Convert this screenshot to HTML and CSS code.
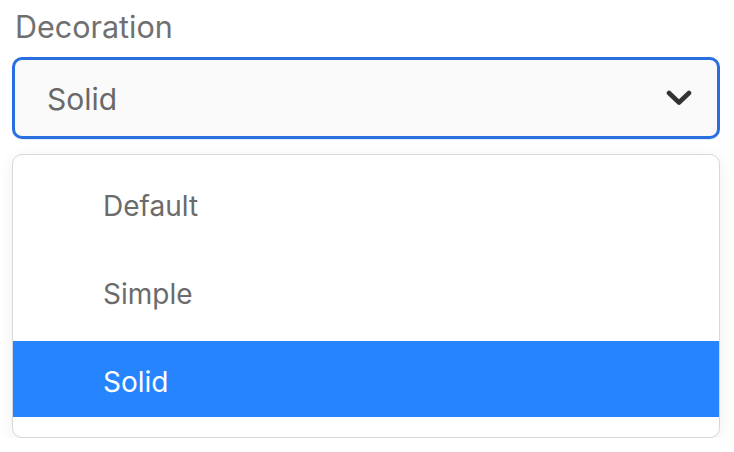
FILE: index.html
```
<!DOCTYPE html>
<html>
<head>
<meta charset="utf-8">
<link rel="stylesheet" href="styles.css">
</head>
<body>
<div class="field">
  <div class="label">Decoration</div>
  <div class="select">
    <span class="value">Solid</span>
    <svg class="chevron" width="26" height="16" viewBox="0 0 26 16"><path d="M3 3 L13 12.5 L23 3" fill="none" stroke="#333" stroke-width="4.6" stroke-linecap="round" stroke-linejoin="round"/></svg>
  </div>
  <div class="menu">
    <div class="option">Default</div>
    <div class="option">Simple</div>
    <div class="option selected">Solid</div>
  </div>
</div>
</body>
</html>
```
FILE: styles.css
```
html, body {
  margin: 0;
  padding: 0;
  background: #ffffff;
}
body {
  font-family: Inter, "Noto Sans", sans-serif;
}
.field {
  padding: 9px 14px 0 12px;
  display: flex;
  flex-direction: column;
}
.label {
  font-size: 30.5px;
  line-height: 36px;
  color: #707070;
  padding-left: 3px;
  margin-bottom: 12px;
}
.select {
  height: 82px;
  box-sizing: border-box;
  border: 3px solid #2a6fe0;
  border-radius: 10px;
  background: #fafafa;
  display: flex;
  align-items: center;
  justify-content: space-between;
  padding: 0 25px 0 32px;
  box-shadow: 0 1px 1px rgba(42, 111, 224, 0.15);
}
.value {
  font-size: 30px;
  line-height: 36px;
  color: #696969;
  padding-top: 2px;
}
.chevron {
  display: block;
}
.menu {
  margin-top: 15px;
  border: 1.5px solid #d8d8d8;
  border-radius: 10px;
  background: #fff;
  padding: 10px 0 20px 0;
  display: flex;
  flex-direction: column;
  gap: 12px;
  box-shadow: 0 3px 16px rgba(0, 0, 0, 0.07);
}
.option {
  height: 76px;
  box-sizing: border-box;
  padding: 6px 0 0 90px;
  font-size: 28px;
  line-height: 70px;
  color: #6b6b6b;
}
.option.selected {
  background: #2684ff;
  color: #ffffff;
}
```
